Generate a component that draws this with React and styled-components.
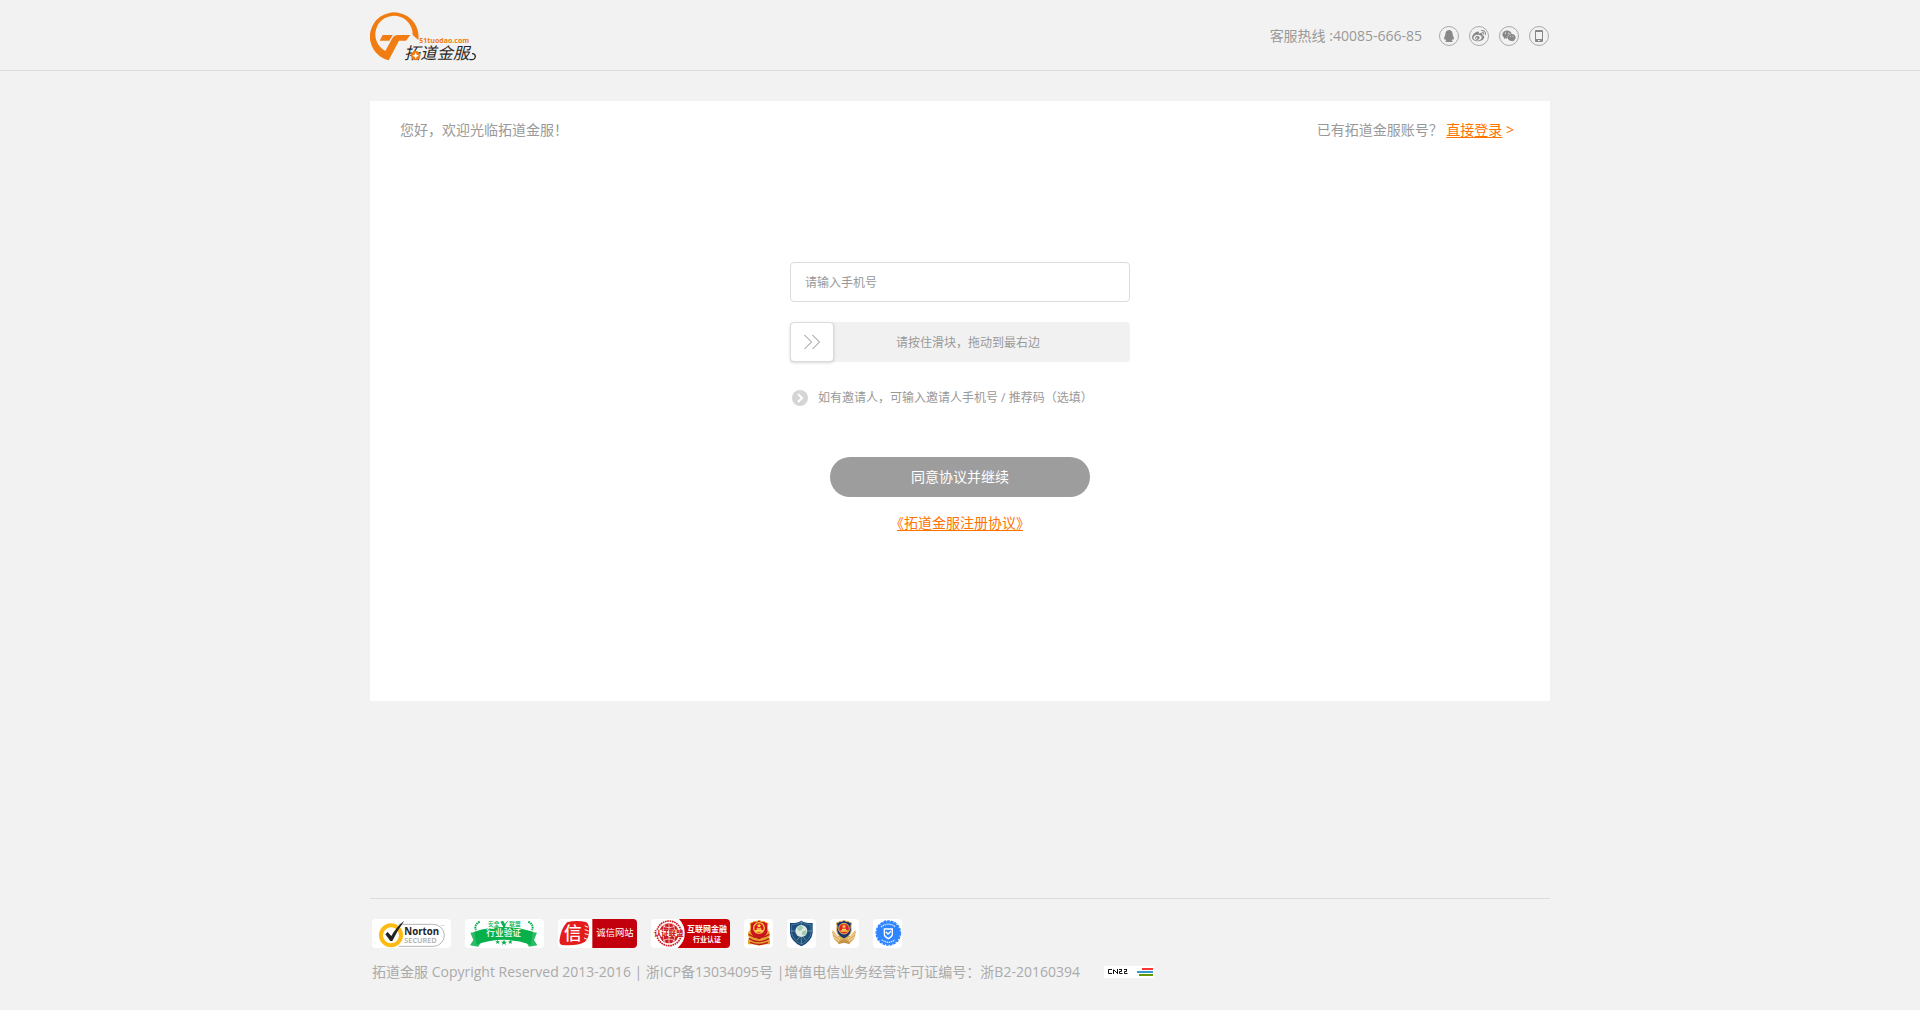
import React, { useState } from "react";
import styled, { createGlobalStyle } from "styled-components";
import { FaQq, FaWeibo, FaWeixin } from "react-icons/fa";

const SANS = '"Open Sans", "Noto Sans CJK SC", sans-serif';
const ACCENT = "#ff7200";

const GlobalStyle = createGlobalStyle`
  *, *::before, *::after { box-sizing: border-box; }
  body {
    margin: 0;
    background: #f2f2f2;
    color: #999;
    font: 14px/20px ${SANS};
  }
  button, input { font-family: inherit; }
`;

const Page = styled.div`
  min-height: 100vh;
  display: flex;
  flex-direction: column;
`;

const Container = styled.div`
  width: 100%;
  max-width: 1180px;
  margin: 0 auto;
`;

const Header = styled.header`
  border-bottom: 1px solid #dcdcdc;
`;

const HeaderRow = styled(Container)`
  height: 70px;
  padding: 2px 1px 0 0;
  display: flex;
  align-items: center;
  justify-content: space-between;
`;

const HomeLink = styled.a`
  display: block;
  svg { display: block; }
`;

const Contact = styled.div`
  display: flex;
  align-items: center;
  gap: 17px;
`;

const SocialList = styled.nav`
  display: flex;
  gap: 10px;
`;

const SocialLink = styled.a`
  width: 20px;
  height: 20px;
  border: 1px solid #aaa;
  border-radius: 50%;
  display: flex;
  align-items: center;
  justify-content: center;
  color: #888;
`;

const Card = styled(Container).attrs({ as: "main" })`
  min-height: 600px;
  margin-top: 30px;
  margin-bottom: 30px;
  background: #fff;
`;

const CardTop = styled.div`
  display: flex;
  justify-content: space-between;
  padding: 19px 36px 19px 30px;
`;

const AccentLink = styled.a`
  color: ${ACCENT};
  text-decoration: ${(p) => (p.$plain ? "none" : "underline")};
  text-underline-offset: 2px;
  font-feature-settings: "halt";
`;

const Form = styled.form`
  width: 340px;
  margin: 103px auto 0;
  display: flex;
  flex-direction: column;
  gap: 20px;
`;

const PhoneInput = styled.input`
  width: 100%;
  height: 40px;
  padding: 0 14px;
  border: 1px solid #dcdcdc;
  border-radius: 4px;
  background: #fff;
  color: #666;
  font-size: 12px;
  outline: none;
  &::placeholder { color: #999; opacity: 1; }
`;

const chevrons = encodeURIComponent(
  '<svg xmlns="http://www.w3.org/2000/svg" width="16" height="14" fill="none" stroke="#888"><path d="M.5 0 7.5 7 .5 14M8.5 0l7 7-7 7"/></svg>'
);

const SlideTrack = styled.label`
  display: grid;
  height: 40px;
  border-radius: 4px;
  background: #f1f1f1;
  font-size: 12px;
  > * { grid-area: 1 / 1; }
`;

const SlideText = styled.span`
  align-self: center;
  padding: 2px 0 0 16px;
  text-align: center;
`;

const SlideInput = styled.input`
  appearance: none;
  width: 100%;
  height: 40px;
  margin: 0;
  background: transparent;
  cursor: pointer;
  &::-webkit-slider-thumb {
    appearance: none;
    width: 44px;
    height: 40px;
    border: 1px solid #dcdcdc;
    border-radius: 4px;
    box-shadow: 0 1px 3px rgba(0, 0, 0, 0.16);
    background: #fff url("data:image/svg+xml,${chevrons}") center / 16px 14px no-repeat;
  }
`;

const InviteToggle = styled.button`
  display: flex;
  align-items: center;
  gap: 10px;
  margin-top: 6px;
  padding: 0 2px;
  border: 0;
  background: none;
  color: #999;
  font-size: 12px;
  line-height: 20px;
  cursor: pointer;
`;

const SubmitArea = styled.div`
  display: flex;
  flex-direction: column;
  align-items: center;
  gap: 16px;
  margin-top: 29px;
`;

const SubmitButton = styled.button`
  width: 260px;
  height: 40px;
  padding: 0 0 2px;
  border: 0;
  border-radius: 20px;
  background: #9d9d9d;
  color: #fff;
  font-size: 14px;
  cursor: pointer;
`;

const Footer = styled(Container).attrs({ as: "footer" })`
  margin-top: auto;
  padding: 20px 2px 28px;
  border-top: 1px solid #dcdcdc;
`;

const BadgeList = styled.div`
  display: flex;
  gap: 14px;
`;

const Badge = styled.a`
  width: ${(p) => (p.$small ? "29px" : "79px")};
  height: 29px;
  border-radius: 4px;
  background: #fff;
  overflow: hidden;
  svg { display: block; }
`;

const Legal = styled.div`
  display: flex;
  align-items: center;
  gap: 24px;
  margin-top: 14px;
  color: #aaa;
`;

const Stats = styled.a`
  height: 12px;
  background: #fff;
  svg { display: block; }
`;

const HanText = styled.text`
  font-family: "Liberation Sans", "Noto Sans CJK SC", sans-serif;
`;

const LatinText = styled.text`
  font-family: "Open Sans", sans-serif;
`;

function Logo() {
  return (
    <svg width="120" height="56" viewBox="30 24 360 168" role="img" aria-label="拓道金服">
      <path
        fill="#f07c12"
        d="M175 120A73 73 0 1 0 86 181L117 122H138L151 105H114Q102 105 96 116L76 153A56 56 0 1 1 158 105Z"
      />
      <path fill="#f07c12" d="M68 105H98L88 122H59Z" />
      <LatinText x="178" y="129" fontSize="21" fontWeight="700" fill="#f07c12">51tuodao.com</LatinText>
      <HanText x="132" y="177" fontSize="49" fontWeight="400" fontStyle="italic" fill="#2c2726">拓道金服</HanText>
      <path d="M328 178Q346 182 346 169Q345 160 336 161" fill="none" stroke="#2c2726" strokeWidth="4" />
      <circle cx="167" cy="167" r="14" fill="#f07c12" />
      <path d="M167 157l3 7 7 3-7 3-3 7-3-7-7-3 7-3z" fill="#fff" />
    </svg>
  );
}

function PhoneIcon() {
  return (
    <svg width="8" height="12" viewBox="0 0 8 12">
      <rect width="8" height="12" rx="1" fill="#888" />
      <path d="M1 2h6v7H1z" fill="#f2f2f2" />
      <path d="M3 10h2v1H3z" fill="#f2f2f2" />
    </svg>
  );
}

function NortonArt() {
  return (
    <svg width="79" height="29" viewBox="0 0 237 87">
      <path d="M80 16H184A32 32 0 0 1 184 82H80" fill="#fff" stroke="#b5b5b5" strokeWidth="3" />
      <circle cx="57" cy="49" r="30" fill="#fff" stroke="#fdbb11" strokeWidth="12" />
      <path d="M40 46L47 39L58 51Q74 22 97 5Q75 36 61 66H55Z" fill="#222" />
      <LatinText x="97" y="49" fontSize="29" fontWeight="700" fill="#222">Norton</LatinText>
      <LatinText x="97" y="71" fontSize="22" fontWeight="600" fill="#aaa">SECURED</LatinText>
      <LatinText x="207" y="21" fontSize="7" fill="#888">TM</LatinText>
    </svg>
  );
}

function AllianceArt() {
  return (
    <svg width="79" height="29" viewBox="0 0 237 87">
      <g fill="#08b04b">
        <path d="M16 41L48 36V70L40 83L15 79L25 63Z" opacity=".85" />
        <path d="M216 41L184 36V70L192 83L217 79L207 63Z" opacity=".85" />
        <path d="M28 38Q116 10 204 38L198 77Q116 48 34 77Z" />
        <path d="M106 8L114 5L120 15Q124 7 131 4Q122 14 120 24H115Z" />
        <path d="M117 62l3 6h6l-5 4 2 6-6-4-6 4 2-6-5-4h6zM98 62l2 5h5l-4 3 2 5-5-3-5 3 2-5-4-3h5zM136 62l2 5h5l-4 3 2 5-5-3-5 3 2-5-4-3h5z" />
        <HanText x="69" y="20" fontSize="17" fontWeight="500">安全</HanText>
        <HanText x="133" y="20" fontSize="17" fontWeight="500">联盟</HanText>
      </g>
      <path d="M44 8Q26 18 33 33M190 8Q208 18 201 33" fill="none" stroke="#08b04b" strokeWidth="6" strokeDasharray="5 2" />
      <HanText x="64" y="52" fontSize="26" fontWeight="500" fill="#fff">行业验证</HanText>
    </svg>
  );
}

function HonestArt() {
  return (
    <svg width="79" height="29" viewBox="0 0 237 87">
      <path d="M103 0H237V87H103Z" fill="#c2000d" />
      <path d="M27 10Q54 2 84 9Q94 14 93 36Q94 56 80 69Q57 82 12 78Q2 76 5 60Q9 30 27 10Z" fill="#e51c1c" />
      <path d="M80 20l10 5M80 32l12 4M80 44l12 3M78 57l10 4" stroke="#fff" strokeWidth="3" />
      <HanText x="18" y="62" fontSize="53" fontWeight="500" fill="#fff">信</HanText>
      <HanText x="115" y="51" fontSize="28" fill="#fff">诚信网站</HanText>
    </svg>
  );
}

function FinanceArt() {
  return (
    <svg width="79" height="29" viewBox="0 0 237 87">
      <path d="M84 0H237V87H80Q103 66 101 42Q101 18 84 0Z" fill="#cb0007" />
      <circle cx="54" cy="43" r="37" fill="none" stroke="#cf1c22" strokeWidth="5" strokeDasharray="5 2" />
      <circle cx="54" cy="43" r="30" fill="#cf1c22" />
      <path d="M25 43H83M54 13V73M35 20Q54 32 73 20M35 66Q54 54 73 66M43 14Q28 43 43 72M65 14Q80 43 65 72" stroke="#fff" strokeWidth="2" fill="none" />
      <path d="M7 32H99V54H7Z" fill="#fff" />
      <HanText x="9" y="51" fontSize="22" fontWeight="900" fill="#cf1c22">认证联盟</HanText>
      <HanText x="108" y="38" fontSize="24" fontWeight="700" fill="#fff">互联网金融</HanText>
      <HanText x="126" y="68" fontSize="21" fontWeight="700" fill="#fff">行业认证</HanText>
    </svg>
  );
}

function IndustryEmblem() {
  return (
    <svg width="29" height="29" viewBox="0 0 87 87">
      <path d="M12 39L24 34H66L77 39V53L72 57L78 63V76H57L45 81L32 76H12V64L18 58L12 51Z" fill="#e9a632" />
      <path d="M18 13Q24 12 29 8Q37 10 45 4Q53 10 61 8Q66 12 72 13Q68 22 72 37Q69 52 45 63Q21 52 18 37Q22 22 18 13Z" fill="#ca1520" stroke="#eba72a" strokeWidth="3" />
      <circle cx="45" cy="27" r="16" fill="#d71920" stroke="#f6c53c" strokeWidth="4" />
      <path d="M45 13l2 5h5l-4 3 2 5-5-3-5 3 2-5-4-3h5zM34 33h22v5H34zM38 28h14v4H38z" fill="#ffe151" />
      <path d="M14 46Q45 66 76 46M14 58Q45 78 76 58M18 70Q45 82 72 70" fill="none" stroke="#b92219" strokeWidth="4" />
    </svg>
  );
}

function ShieldEmblem() {
  return (
    <svg width="29" height="29" viewBox="0 0 87 87">
      <path d="M43 5Q54 13 77 12V41Q75 66 43 82Q11 66 9 41V12Q32 13 43 5Z" fill="#174878" />
      <path d="M43 10Q55 17 72 17V41Q70 62 43 76Q16 62 14 41V17Q31 17 43 10Z" fill="#1d4f7c" stroke="#638cac" strokeWidth="2" />
      <circle cx="43" cy="36" r="18" fill="#dceadf" />
      <path d="M30 27l10-7 9 4-4 8-9 5zM47 37l10-3 2 9-9 7-6-5z" fill="#9cc9b8" />
      <path d="M43 55V75M30 64L38 54M56 64L49 54" stroke="#9fb56a" strokeWidth="2" />
      <path d="M43 5V18M10 36H24M62 36H77" stroke="#7fa3b8" strokeWidth="2" />
    </svg>
  );
}

function PoliceEmblem() {
  return (
    <svg width="29" height="29" viewBox="0 0 87 87">
      <path d="M8 33Q5 44 9 52Q12 66 27 73L42 69L57 73Q72 66 75 52Q79 44 76 33L62 50H22Z" fill="#dcae61" />
      <path d="M9 43L30 60M11 54L30 68M75 43L54 60M73 54L54 68" stroke="#fff0c4" strokeWidth="2" />
      <path d="M19 12Q25 11 30 7Q37 8 42 4Q47 8 54 7Q59 11 65 12Q61 20 64 33Q63 50 42 60Q21 50 20 33Q23 20 19 12Z" fill="#18356c" stroke="#e4b35b" strokeWidth="3" />
      <circle cx="42" cy="29" r="16" fill="#db2429" stroke="#e7b851" strokeWidth="3" />
      <path d="M42 15l2 5h5l-4 3 2 5-5-3-5 3 2-5-4-3h5zM32 34h21v4H32zM36 29h12v4H36z" fill="#ffda4c" />
      <path d="M26 68L42 60L58 68L60 76L42 71L24 76Z" fill="#c69142" />
    </svg>
  );
}

function VerifiedEmblem() {
  return (
    <svg width="29" height="29" viewBox="0 0 87 87">
      <circle cx="46" cy="42" r="35" fill="#2f85ff" />
      <circle cx="46" cy="42" r="36" fill="none" stroke="#2f85ff" strokeWidth="5" strokeDasharray="8 3" />
      <path d="M24 24Q46 7 68 24M26 62Q46 78 66 62" fill="none" stroke="#d5e8ff" strokeWidth="4" strokeDasharray="4 2" />
      <path d="M34 30H58V46Q57 54 46 59Q35 54 34 46Z" fill="none" stroke="#fff" strokeWidth="4" />
      <path d="M38 38L45 45L54 37" fill="none" stroke="#fff" strokeWidth="4" />
    </svg>
  );
}

function StatsArt() {
  return (
    <svg width="50" height="12" viewBox="0 0 50 12">
      <path
        d="M8 3.500H4.500V7.500H8M9.500 8V3.500M10 4.500H11M11 5.500H12M12 6.500H13M13.500 8V3M15 3.500H18M17.500 4V5.500H15.500V7.500H18.500M20 3.500H23M22.500 4V5.500H20.500V7.500H23.500"
        fill="none"
        stroke="#111"
      />
      <path d="M38 2h11v2H38z" fill="#f33" />
      <path d="M33 5h16v2H33z" fill="#39c" />
      <path d="M35 8h14v2H35z" fill="#690" />
    </svg>
  );
}

const socials = [
  { label: "QQ", icon: <FaQq size={12} /> },
  { label: "微博", icon: <FaWeibo size={14} /> },
  { label: "微信", icon: <FaWeixin size={14} /> },
  { label: "手机", icon: <PhoneIcon /> },
];

const badges = [
  { label: "Norton Secured", art: <NortonArt /> },
  { label: "安全联盟行业验证", art: <AllianceArt /> },
  { label: "诚信网站", art: <HonestArt /> },
  { label: "互联网金融行业认证", art: <FinanceArt /> },
  { label: "工商认证", art: <IndustryEmblem />, small: true },
  { label: "网络安全", art: <ShieldEmblem />, small: true },
  { label: "网络警察", art: <PoliceEmblem />, small: true },
  { label: "安全认证", art: <VerifiedEmblem />, small: true },
];

export default function App() {
  const [slide, setSlide] = useState(0);

  return (
    <Page>
      <GlobalStyle />
      <Header>
        <HeaderRow>
          <HomeLink href="#"><Logo /></HomeLink>
          <Contact>
            <span>客服热线 :40085-666-85</span>
            <SocialList>
              {socials.map((s) => (
                <SocialLink key={s.label} href="#" aria-label={s.label}>{s.icon}</SocialLink>
              ))}
            </SocialList>
          </Contact>
        </HeaderRow>
      </Header>

      <Card>
        <CardTop>
          <span>您好，欢迎光临拓道金服！</span>
          <span>
            已有拓道金服账号？ <AccentLink href="#">直接登录</AccentLink>{" "}
            <AccentLink href="#" $plain>&gt;</AccentLink>
          </span>
        </CardTop>
        <Form onSubmit={(e) => e.preventDefault()}>
          <PhoneInput type="tel" placeholder="请输入手机号" aria-label="请输入手机号" />
          <SlideTrack>
            <SlideText>请按住滑块，拖动到最右边</SlideText>
            <SlideInput
              type="range"
              min="0"
              max="100"
              value={slide}
              onChange={(e) => setSlide(Number(e.target.value))}
            />
          </SlideTrack>
          <InviteToggle type="button">
            <svg width="16" height="16" viewBox="0 0 16 16">
              <circle cx="8" cy="8" r="8" fill="#d5d5d5" />
              <path d="M6 4l4 4-4 4" fill="none" stroke="#fff" strokeWidth="2" />
            </svg>
            如有邀请人，可输入邀请人手机号 / 推荐码（选填）
          </InviteToggle>
          <SubmitArea>
            <SubmitButton type="submit">同意协议并继续</SubmitButton>
            <AccentLink href="#">《拓道金服注册协议》</AccentLink>
          </SubmitArea>
        </Form>
      </Card>

      <Footer>
        <BadgeList>
          {badges.map((b) => (
            <Badge key={b.label} href="#" aria-label={b.label} $small={b.small}>{b.art}</Badge>
          ))}
        </BadgeList>
        <Legal>
          <span>拓道金服 Copyright Reserved 2013-2016 | 浙ICP备13034095号 |增值电信业务经营许可证编号：浙B2-20160394</span>
          <Stats href="#" aria-label="CNZZ"><StatsArt /></Stats>
        </Legal>
      </Footer>
    </Page>
  );
}
